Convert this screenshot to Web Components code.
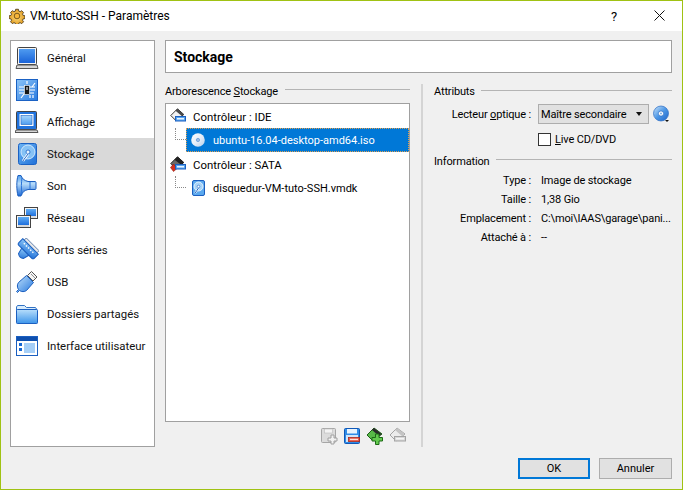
<!DOCTYPE html>
<html lang="fr">
<head>
<meta charset="utf-8">
<title>VM-tuto-SSH - Paramètres</title>
<style>
  html, body { margin: 0; padding: 0; background: #f0f0f0; }
  body { font: 11.4px Roboto, "Open Sans", sans-serif; color: #000; }
  u { text-decoration: underline; }
</style>
</head>
<body>
<vm-window>
  <vm-nav slot="nav">
    <vm-nav-item icon="general">Général</vm-nav-item>
    <vm-nav-item icon="system">Système</vm-nav-item>
    <vm-nav-item icon="display">Affichage</vm-nav-item>
    <vm-nav-item icon="storage" active>Stockage</vm-nav-item>
    <vm-nav-item icon="audio">Son</vm-nav-item>
    <vm-nav-item icon="network">Réseau</vm-nav-item>
    <vm-nav-item icon="serial">Ports séries</vm-nav-item>
    <vm-nav-item icon="usb">USB</vm-nav-item>
    <vm-nav-item icon="folder">Dossiers partagés</vm-nav-item>
    <vm-nav-item icon="ui">Interface utilisateur</vm-nav-item>
  </vm-nav>
  <vm-tree-pane slot="tree">
    <vm-tree-row icon="ide">Contrôleur : IDE</vm-tree-row>
    <vm-tree-row icon="cd" child selected>ubuntu-16.04-desktop-amd64.iso</vm-tree-row>
    <vm-tree-row icon="sata">Contrôleur : SATA</vm-tree-row>
    <vm-tree-row icon="hd" child>disquedur-VM-tuto-SSH.vmdk</vm-tree-row>
  </vm-tree-pane>
  <vm-attrs slot="attrs"></vm-attrs>
</vm-window>

<script>
const ICONS = {
  gear: `<svg viewBox="0 0 16 16"><defs><radialGradient id="g"><stop offset="0" stop-color="#ffdf80"/><stop offset="1" stop-color="#e09a20"/></radialGradient></defs>
    <path d="M6.500 .7h3l.4 2 1.400.6 1.700-1.100 2 2-1.100 1.700.6 1.400 2 .4v3l-2 .4-.6 1.400 1.100 1.700-2 2-1.700-1.100-1.400.6-.4 2h-3l-.4-2-1.400-.6-1.700 1.100-2-2 1.100-1.700-.6-1.400-2-.4v-3l2-.4.6-1.400-1.100-1.700 2-2 1.700 1.100 1.400-.6z" fill="url(#g)" stroke="#4a3a1a" stroke-width=".9" transform="translate(.6 .6) scale(.93)"/>
    <circle cx="8" cy="8" r="2.800" fill="#f6b53a" stroke="#6b4d16" stroke-width=".9"/></svg>`,
  general: `<svg viewBox="0 0 24 24"><defs><linearGradient id="g" x1="0" y1="0" x2="0" y2="1"><stop offset="0" stop-color="#4f9bf0"/><stop offset="1" stop-color="#1a63d8"/></linearGradient></defs>
    <rect x="2.500" y="1.500" width="19" height="17" fill="#f4f4f4" stroke="#444" rx="1"/><rect x="4" y="3" width="16" height="14" fill="url(#g)"/>
    <path d="M2 19h20l1 3.500H1z" fill="#d6d6d6" stroke="#555"/></svg>`,
  system: `<svg viewBox="0 0 24 24"><defs><linearGradient id="g" x1="0" y1="0" x2="1" y2="1"><stop offset="0" stop-color="#8cc4f7"/><stop offset="1" stop-color="#2a7be0"/></linearGradient></defs>
    <rect x="1.500" y="1.500" width="21" height="21" fill="url(#g)" stroke="#1b62c4"/>
    <path d="M4 9h6M4 12h6M4 15h6M14 9h6M14 12h6M14 15h5M17 9l3-4M6 20l3-4M15 17v3M18 17v3M12 3v3" stroke="#fff" stroke-width="1.200" fill="none"/>
    <rect x="9.500" y="7.500" width="5" height="9" fill="#151515" stroke="#fff" stroke-width=".6"/><rect x="11" y="9" width="2" height="3" fill="#8a8a8a"/></svg>`,
  display: `<svg viewBox="0 0 24 24"><defs><linearGradient id="g" x1="0" y1="0" x2="0" y2="1"><stop offset="0" stop-color="#a9d6fb"/><stop offset="1" stop-color="#4e9ef0"/></linearGradient></defs>
    <rect x="1.500" y="1.500" width="20" height="18" fill="#2173dd" stroke="#444" rx="1"/><rect x="4.500" y="4" width="14" height="12" fill="#fff"/><rect x="6" y="5.500" width="11" height="9" fill="url(#g)" stroke="#1b62c4" stroke-width=".6"/>
    <path d="M1 20h21l1 2.500H0z" fill="#d6d6d6" stroke="#555"/></svg>`,
  storage: `<svg viewBox="0 0 24 24"><defs><linearGradient id="g" x1="0" y1="0" x2="1" y2="1"><stop offset="0" stop-color="#6cb4f4"/><stop offset="1" stop-color="#1f70d8"/></linearGradient></defs>
    <rect x="3.500" y="1.500" width="18" height="21" rx="2" fill="url(#g)" stroke="#1b62c4"/>
    <circle cx="13" cy="10" r="7" fill="#86c2f5" stroke="#e6f4ff" stroke-width=".8"/><circle cx="13" cy="10" r="2" fill="#e6f4ff" stroke="#1b62c4" stroke-width=".8"/>
    <path d="M13 12c-2 3-4 5-5 7" stroke="#fff" stroke-width="2.400" fill="none"/><path d="M13 12c-2 3-4 5-5 7" stroke="#1b62c4" fill="none"/></svg>`,
  audio: `<svg viewBox="0 0 24 24"><defs><linearGradient id="g" x1="0" y1="0" x2="0" y2="1"><stop offset="0" stop-color="#4f9cec"/><stop offset=".4" stop-color="#b7dcfa"/><stop offset="1" stop-color="#1c68d6"/></linearGradient></defs>
    <path d="M3 1.500h3c1 3 3 5 7 6h7c1 0 1 1 1 1v6s0 1-1 1h-7c-4 1-6 3-7 6.500H3c-.8-3-1.200-7-1.200-10.500S2.200 4 3 1.500z" fill="url(#g)" stroke="#1b5fc0"/>
    <path d="M7 3.500c-.8 5-.8 11 0 17M15 8v7.500" stroke="#2a74d8" fill="none"/></svg>`,
  network: `<svg viewBox="0 0 24 24"><defs><linearGradient id="g" x1="0" y1="0" x2="0" y2="1"><stop offset="0" stop-color="#60adf5"/><stop offset="1" stop-color="#1f6fdc"/></linearGradient></defs>
    <rect x="9.500" y="1.500" width="13" height="11" fill="#f5f5f5" stroke="#444"/><rect x="11" y="3" width="10" height="7" fill="url(#g)"/><rect x="11" y="10" width="10" height="2" fill="#ddd"/>
    <rect x="1.500" y="9.500" width="14" height="12" fill="#f5f5f5" stroke="#444"/><rect x="3" y="11" width="11" height="8" fill="url(#g)"/><path d="M3 20h11" stroke="#bbb"/></svg>`,
  serial: `<svg viewBox="0 0 24 24"><defs><linearGradient id="g" x1="0" y1="0" x2="1" y2="1"><stop offset="0" stop-color="#8cc6f6"/><stop offset="1" stop-color="#1f70d8"/></linearGradient></defs>
    <g transform="rotate(45 12 12) translate(0 1)"><rect x="3" y="3" width="18" height="3" fill="#e8e8e8" stroke="#4a6fa0" stroke-width=".8"/><path d="M1 6h22v5.500a2 2 0 0 1-2 2H3a2 2 0 0 1-2-2z" fill="url(#g)" stroke="#1b5fc0"/><path d="M7 13.500h10l-1.500 6c-2 1.500-5 1.500-7 0z" fill="url(#g)" stroke="#1b5fc0"/>
    <path d="M5 8.500h14" stroke="#fff" stroke-width="1.400" stroke-dasharray="1.500 1.500"/></g></svg>`,
  usb: `<svg viewBox="0 0 24 24"><defs><linearGradient id="g" x1="0" y1="0" x2="1" y2="1"><stop offset="0" stop-color="#c2e2fb"/><stop offset="1" stop-color="#2678de"/></linearGradient></defs>
    <path d="M16.500 1.500l5.500 5.500-4 4-5.500-5.500z" fill="#f4f4f4" stroke="#555"/><path d="M16.500 4.500l1 1M18.500 6.500l1 1" stroke="#333"/>
    <path d="M11.500 5.500l7 7-7 8c-2 1.500-5 1.500-7 0l-2 2-1-1 2-2c-1.500-2-1.500-5 0-7z" fill="url(#g)" stroke="#1b5fc0"/></svg>`,
  folder: `<svg viewBox="0 0 24 24"><defs><linearGradient id="g" x1="0" y1="0" x2="0" y2="1"><stop offset="0" stop-color="#b8defb"/><stop offset="1" stop-color="#3d95ea"/></linearGradient></defs>
    <path d="M1.500 7V5l1-1.500h7l2 2h9l1 1.500v2h-20z" fill="#d8ecfc" stroke="#3272c4"/>
    <rect x="1.500" y="7.500" width="21" height="14" rx=".8" fill="url(#g)" stroke="#1b5fc0"/></svg>`,
  ui: `<svg viewBox="0 0 24 24"><rect x="1.500" y="2.500" width="21" height="19" fill="#fff" stroke="#1b5fc0"/><rect x="2" y="3" width="20" height="4" fill="#0e4fae"/>
    <rect x="4" y="9" width="3" height="3" fill="#1667d2"/><rect x="4" y="14" width="3" height="3" fill="#1667d2"/><rect x="9" y="9" width="11" height="10" fill="#a6cff7"/></svg>`,
  ide: `<svg viewBox="0 0 16 16"><path d="M7.500 .8L.8 7.500l5 5 8-6z" fill="#f2f2f2" stroke="#333"/><path d="M7.500 .8l6.300 5.700-2 1.500L5.500 2.800z" fill="#4a4a4a"/>
    <rect x="5.500" y="8.500" width="10" height="4.500" fill="#5aa7ef" stroke="#1b5fc0"/><rect x="7" y="10" width="7" height="1.500" fill="#e9f4ff"/></svg>`,
  sata: `<svg viewBox="0 0 16 16"><path d="M7.500 .8L.8 7.500l5 5 8-6z" fill="#6a6a6a" stroke="#222"/><path d="M7.500 .8l6.300 5.700-3 2L4.500 3.800z" fill="#222"/>
    <path d="M3.500 8l3.500 4.500-3.500 3-3-4z" fill="#d8301e" stroke="#8f1d10" stroke-width=".6"/>
    <rect x="5.500" y="8.500" width="10" height="4.500" fill="#5aa7ef" stroke="#1b5fc0"/><rect x="7" y="10" width="7" height="1.500" fill="#e9f4ff"/></svg>`,
  cd: `<svg viewBox="0 0 16 16"><defs><linearGradient id="g" x1="0" y1="0" x2="1" y2="1"><stop offset="0" stop-color="#fff"/><stop offset=".5" stop-color="#e6eef8"/><stop offset="1" stop-color="#b5cfec"/></linearGradient></defs>
    <circle cx="8" cy="8" r="6.800" fill="url(#g)"/><circle cx="8" cy="8" r="2.300" fill="#4f8acf" stroke="#f4f9ff" stroke-width=".8"/><circle cx="8" cy="8" r=".8" fill="#fff"/></svg>`,
  hd: `<svg viewBox="0 0 16 16"><rect x="2.500" y=".5" width="12" height="15" rx="1.500" fill="#5aa8ee" stroke="#1b5fc0"/>
    <circle cx="8.500" cy="6.500" r="4.500" fill="#a9d4f8" stroke="#fff" stroke-width=".7"/><circle cx="8.500" cy="6.500" r="1.300" fill="#fff" stroke="#1b5fc0" stroke-width=".6"/>
    <path d="M8.500 8c-1 2-2.500 3.500-3.500 5" stroke="#fff" stroke-width="1.800" fill="none"/><path d="M8.500 8c-1 2-2.500 3.500-3.500 5" stroke="#1b5fc0" fill="none"/></svg>`,
  cdadd: `<svg viewBox="0 0 18 18"><defs><linearGradient id="g" x1="0" y1="0" x2="1" y2="1"><stop offset="0" stop-color="#cfe6fa"/><stop offset=".5" stop-color="#4c97e6"/><stop offset="1" stop-color="#1d62c6"/></linearGradient></defs>
    <circle cx="9" cy="8.500" r="7.500" fill="url(#g)" stroke="#2a6cc4" stroke-width=".7"/><circle cx="9" cy="8.500" r="2.600" fill="#fff" stroke="#2a6cc4" stroke-width=".7"/><circle cx="9" cy="8.500" r=".9" fill="#6aa2de"/>
    <path d="M13 15h4l-2 2z" fill="#111"/></svg>`,
  diskadd: `<svg viewBox="0 0 18 18"><rect x="1.500" y="1.500" width="14" height="14" rx="1" fill="#dcdcdc" stroke="#a6a6a6"/><rect x="4.500" y="2" width="8" height="4" fill="#f4f4f4" stroke="#bbb" stroke-width=".6"/>
    <path d="M11 8h3v3h3v3h-3v3h-3v-3H8v-3h3z" fill="#f2f2f2" stroke="#a0a0a0"/></svg>`,
  diskdel: `<svg viewBox="0 0 18 18"><rect x="1.500" y="1.500" width="15" height="15" rx="1" fill="#2f8be6" stroke="#0f58b8"/><rect x="4" y="2" width="10" height="4.500" fill="#e8f3fd"/><rect x="3" y="8" width="12" height="7" fill="#cfe5fa"/>
    <rect x="5.500" y="10.500" width="11" height="4" fill="#e85b4a" stroke="#a8261a" stroke-width=".8"/><rect x="7" y="11.800" width="8" height="1.300" fill="#fde0da"/></svg>`,
  ctladd: `<svg viewBox="0 0 18 18"><path d="M8 1L1 8l6 6 9-7z" fill="#58b948" stroke="#1d5e18"/><path d="M8 1l7.500 6-2.500 2L6 3z" fill="#2a2a2a"/>
    <path d="M9.500 7h3.500v3.500h3.500V14H13v3.500H9.500V14H6v-3.500h3.500z" fill="#63c94f" stroke="#1d6a16"/></svg>`,
  ctldel: `<svg viewBox="0 0 18 18"><path d="M8 1L1 8l6 6 9-7z" fill="#ececec" stroke="#a4a4a4"/><path d="M8 1l7.500 6-2.500 2L6 3z" fill="#c4c4c4"/>
    <rect x="5.500" y="9.500" width="11" height="4.500" fill="#d8d8d8" stroke="#a4a4a4"/><rect x="7" y="11" width="8" height="1.500" fill="#f5f5f5"/></svg>`
};

class VmIcon extends HTMLElement {
  connectedCallback() {
    const size = this.getAttribute('size') || 24;
    const shadow = this.attachShadow({mode: 'open'});
    shadow.innerHTML = `
      <style>
        :host { display: block; width: ${size}px; height: ${size}px; flex: none; }
        svg { display: block; width: 100%; height: 100%; }
      </style>
      ${ICONS[this.getAttribute('name')]}`;
  }
}
customElements.define('vm-icon', VmIcon);

class VmWindow extends HTMLElement {
  connectedCallback() {
    const shadow = this.attachShadow({mode: 'open'});
    shadow.innerHTML = `
      <style>
        :host { display: flex; flex-direction: column; box-sizing: border-box; width: 683px; height: 490px; border: 1px solid #a0c213; background: #f0f0f0; }
        .title { height: 30px; flex: none; background: #fff; display: flex; align-items: center; padding-left: 8px; font-size: 12px; }
        .title span { margin-left: 5px; flex: 1; }
        .help { width: 46px; text-align: center; font-size: 13px; }
        .close { width: 45px; display: flex; justify-content: center; margin-bottom: 1px; }
        .main { flex: 1; display: flex; gap: 10px; padding: 9px 10px 0 9px; min-height: 0; }
        .side { width: 145px; flex: none; display: flex; }
        .content { flex: 1; display: flex; flex-direction: column; min-width: 0; }
        .head { box-sizing: border-box; height: 33px; background: #fff; border: 1px solid #a0a0a0; display: flex; align-items: center; padding-left: 8px; font-size: 14px; font-weight: 700; }
        .panes { flex: 1; display: flex; margin-top: 11px; min-height: 0; }
        .rule { width: 2px; background: #d4d4d4; margin: 0 10px 0 11px; flex: none; }
        .foot { height: 42px; flex: none; display: flex; justify-content: flex-end; gap: 9px; padding: 11px 10px 0 0; box-sizing: border-box; }
      </style>
      <div class="title">
        <vm-icon name="gear" size="16"></vm-icon>
        <span>VM-tuto-SSH - Paramètres</span>
        <div class="help">?</div>
        <div class="close"><svg width="11" height="11" viewBox="0 0 11 11"><path d="M.5 .5l10 10M10.500 .5l-10 10" stroke="#111" fill="none"/></svg></div>
      </div>
      <div class="main">
        <div class="side"><slot name="nav"></slot></div>
        <div class="content">
          <div class="head">Stockage</div>
          <div class="panes">
            <slot name="tree"></slot>
            <div class="rule"></div>
            <slot name="attrs"></slot>
          </div>
        </div>
      </div>
      <div class="foot">
        <vm-button default>OK</vm-button>
        <vm-button>Annuler</vm-button>
      </div>`;
  }
}
customElements.define('vm-window', VmWindow);

class VmNav extends HTMLElement {
  connectedCallback() {
    const shadow = this.attachShadow({mode: 'open'});
    shadow.innerHTML = `
      <style>
        :host { display: flex; flex-direction: column; width: 145px; box-sizing: border-box; border: 1px solid #a0a0a0; background: #fff; padding-top: 1px; }
      </style>
      <slot></slot>`;
  }
}
customElements.define('vm-nav', VmNav);

class VmNavItem extends HTMLElement {
  connectedCallback() {
    const shadow = this.attachShadow({mode: 'open'});
    shadow.innerHTML = `
      <style>
        :host { display: flex; align-items: center; gap: 8px; height: 32px; padding-left: 4px; box-sizing: border-box; white-space: nowrap; color: #111; }
        :host([active]) { background: #d9d9d9; }
      </style>
      <vm-icon name="${this.getAttribute('icon')}" size="24"></vm-icon>
      <span><slot></slot></span>`;
  }
}
customElements.define('vm-nav-item', VmNavItem);

class VmTreePane extends HTMLElement {
  connectedCallback() {
    const shadow = this.attachShadow({mode: 'open'});
    shadow.innerHTML = `
      <style>
        :host { display: flex; flex-direction: column; width: 245px; flex: none; }
        .cap { display: flex; gap: 7px; height: 14px; font-size: 11px; letter-spacing: -.15px; }
        .cap span { margin-top: 1px; }
        .cap i { flex: 1; height: 1px; background: #b4b4b4; margin-top: 5px; }
        .box { box-sizing: border-box; height: 319px; margin-top: 5px; border: 1px solid #a0a0a0; background: #fff; }
        .tools { display: flex; justify-content: flex-end; gap: 5px; margin-top: 5px; padding-right: 3px; }
      </style>
      <div class="cap"><span>Arborescence <u>S</u>tockage</span><i></i></div>
      <div class="box"><slot></slot></div>
      <div class="tools">
        <vm-icon name="diskadd" size="18"></vm-icon>
        <vm-icon name="diskdel" size="18"></vm-icon>
        <vm-icon name="ctladd" size="18"></vm-icon>
        <vm-icon name="ctldel" size="18"></vm-icon>
      </div>`;
  }
}
customElements.define('vm-tree-pane', VmTreePane);

class VmTreeRow extends HTMLElement {
  connectedCallback() {
    const shadow = this.attachShadow({mode: 'open'});
    const child = this.hasAttribute('child');
    shadow.innerHTML = `
      <style>
        :host { display: flex; align-items: center; height: 24px; white-space: nowrap; }
        :host([child]) { font-size: 11px; }
        .conn { box-sizing: border-box; width: 11px; height: 12px; margin: 0 0 12px 9px; border-left: 1px dotted #888; border-bottom: 1px dotted #888; flex: none; }
        .body { flex: 1; height: 100%; display: flex; align-items: center; box-sizing: border-box; padding-left: 4px; gap: 7px; }
        .body span { margin-top: 1px; }
        :host([selected]) .body { background: #0078d7; color: #fff; outline: 1px dotted #e0a050; outline-offset: -1px; }
      </style>
      ${child ? '<div class="conn"></div>' : ''}
      <div class="body"><vm-icon name="${this.getAttribute('icon')}" size="16"></vm-icon><span><slot></slot></span></div>`;
  }
}
customElements.define('vm-tree-row', VmTreeRow);

class VmAttrs extends HTMLElement {
  connectedCallback() {
    const shadow = this.attachShadow({mode: 'open'});
    shadow.innerHTML = `
      <style>
        :host { display: flex; flex-direction: column; flex: 1; min-width: 0; padding-left: 1px; font-size: 11px; letter-spacing: -.15px; }
        .cap { display: flex; gap: 6px; height: 14px; }
        .cap span { margin-top: 1px; }
        .cap i { flex: 1; height: 1px; background: #b4b4b4; margin-top: 6px; }
        .grid { display: grid; grid-template-columns: 97px 1fr; column-gap: 7px; align-items: center; }
        .lbl { text-align: right; white-space: nowrap; }
        .sel-row { display: flex; align-items: center; gap: 3px; }
        .select { box-sizing: border-box; width: 111px; height: 20px; background: #e1e1e1; border: 1px solid #adadad; display: flex; align-items: center; justify-content: space-between; padding: 0 6px 0 2px; white-space: nowrap; }
        .select i { width: 0; height: 0; border: 3.500px solid transparent; border-top: 4px solid #111; border-bottom: 0; }
        .check { display: flex; align-items: center; gap: 4px; margin-top: 8px; grid-column: 2; }
        .check span { margin-top: 1px; }
        .box { box-sizing: border-box; width: 13px; height: 13px; border: 1px solid #333; background: #fff; }
        .info { margin-top: 8px; }
        .info i { margin-top: 5px; }
        .rows { grid-auto-rows: 19px; margin-top: 3px; }
        .val { padding-left: 3px; white-space: nowrap; }
      </style>
      <div class="cap"><span>Attributs</span><i></i></div>
      <div class="grid" style="margin-top:6px">
        <div class="lbl">Lecteur <u>o</u>ptique :</div>
        <div class="sel-row">
          <div class="select"><span>Maître secondaire</span><i></i></div>
          <vm-icon name="cdadd" size="18"></vm-icon>
        </div>
        <div class="check"><div class="box"></div><span><u>L</u>ive CD/DVD</span></div>
      </div>
      <div class="cap info"><span>Information</span><i></i></div>
      <div class="grid rows">
        <div class="lbl">Type :</div><div class="val">Image de stockage</div>
        <div class="lbl">Taille :</div><div class="val">1,38 Gio</div>
        <div class="lbl">Emplacement :</div><div class="val">C:\\moi\\IAAS\\garage\\pani...</div>
        <div class="lbl">Attaché à :</div><div class="val">--</div>
      </div>`;
  }
}
customElements.define('vm-attrs', VmAttrs);

class VmButton extends HTMLElement {
  connectedCallback() {
    const shadow = this.attachShadow({mode: 'open'});
    shadow.innerHTML = `
      <style>
        :host { display: flex; align-items: center; justify-content: center; box-sizing: border-box; width: 73px; height: 21px; background: #e1e1e1; border: 1px solid #adadad; font-size: 11px; }
        :host([default]) { width: 72px; border: 2px solid #0078d7; }
      </style>
      <slot></slot>`;
  }
}
customElements.define('vm-button', VmButton);
</script>
</body>
</html>
